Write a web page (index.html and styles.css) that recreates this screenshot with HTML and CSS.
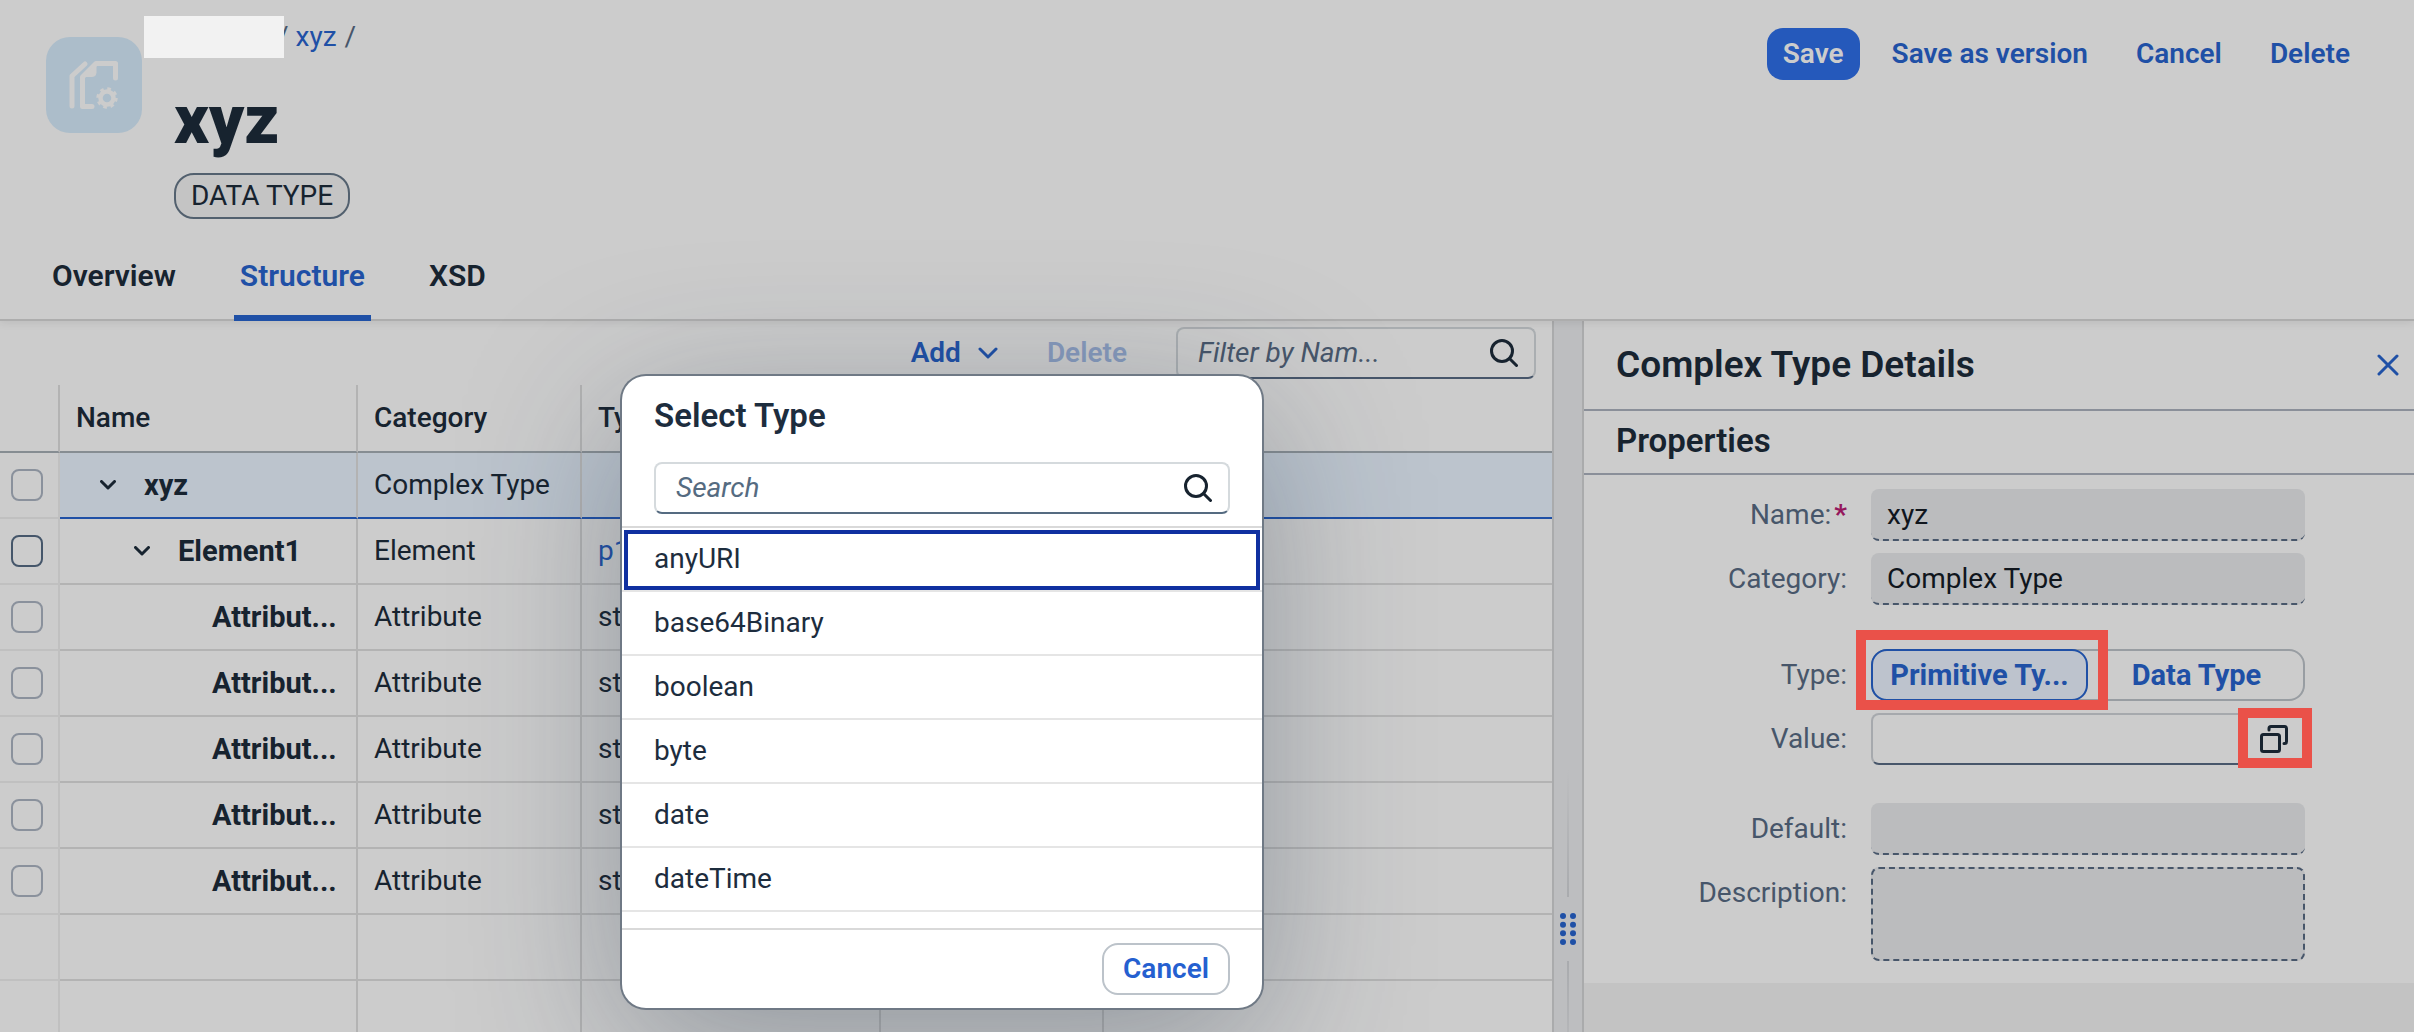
FILE: index.html
```html
<!DOCTYPE html>
<html lang="en">
<head>
<meta charset="utf-8">
<title>xyz - Data Type</title>
<link rel="stylesheet" href="styles.css">
</head>
<body>
<header class="object-header">
  <div class="header-top">
    <div class="avatar">
      <svg viewBox="0 0 96 96" width="96" height="96" fill="none" stroke="#cccccc" stroke-width="5" stroke-linecap="round" stroke-linejoin="round" aria-hidden="true">
        <path d="M39 27 L26 39 V69"/>
        <path d="M46 69.500 H36.500 V40 L50 26.500 H69.500 V41"/>
        <path d="M50 28 V36 Q50 39.500 46 39.500 H38 Z" fill="#cccccc" stroke-width="1"/>
        <circle cx="61" cy="61" r="6.500" stroke-width="4.500"/>
        <circle cx="61" cy="61" r="9" stroke-width="3.400" stroke-linecap="butt" stroke-dasharray="3.500 3.570"/>
      </svg>
    </div>
    <div class="heading">
      <nav class="breadcrumb" aria-label="Breadcrumb">
        <span class="redacted"></span><span class="slash slash-first">/</span><a href="#">xyz</a><span class="slash">/</span>
      </nav>
      <div class="title-block">
        <h1>xyz</h1>
        <span class="tag">DATA TYPE</span>
      </div>
    </div>
    <div class="actions">
      <button type="button" class="btn btn-primary">Save</button>
      <button type="button" class="btn">Save as version</button>
      <button type="button" class="btn">Cancel</button>
      <button type="button" class="btn">Delete</button>
    </div>
  </div>
  <nav class="tabs" aria-label="Sections">
    <a href="#" class="tab">Overview</a>
    <a href="#" class="tab tab-active">Structure</a>
    <a href="#" class="tab">XSD</a>
  </nav>
</header>

<main class="split">
  <section class="structure">
    <div class="toolbar">
      <button type="button" class="tool">Add
        <svg viewBox="0 0 20 12" width="20" height="12" fill="none" stroke="currentColor" stroke-width="3" stroke-linecap="round" stroke-linejoin="round" aria-hidden="true"><path d="M2 2 L10 10 L18 2"/></svg>
      </button>
      <button type="button" class="tool" disabled>Delete</button>
      <div class="search filter">
        <input type="text" placeholder="Filter by Nam..." aria-label="Filter by name">
        <svg class="lens" viewBox="0 0 28 28" width="28" height="28" aria-hidden="true"><circle cx="12" cy="12" r="10.500"/><path d="M19.500 19.500 L26.500 26.500"/></svg>
      </div>
    </div>
    <table class="tree">
      <colgroup><col class="c-sel"><col class="c-name"><col class="c-cat"><col class="c-type"><col class="c-occ"><col></colgroup>
      <thead>
        <tr><th></th><th>Name</th><th>Category</th><th>Type</th><th></th><th></th></tr>
      </thead>
      <tbody>
        <tr class="current">
          <td><input type="checkbox" aria-label="Select xyz"></td>
          <td class="name"><span class="node"><svg class="chev" viewBox="0 0 16 10" aria-hidden="true"><path d="M1.500 1.500 L8 8 L14.500 1.500"/></svg>xyz</span></td>
          <td>Complex Type</td><td></td><td></td><td></td>
        </tr>
        <tr>
          <td><input type="checkbox" class="strong" aria-label="Select Element1"></td>
          <td class="name level-2"><span class="node"><svg class="chev" viewBox="0 0 16 10" aria-hidden="true"><path d="M1.500 1.500 L8 8 L14.500 1.500"/></svg>Element1</span></td>
          <td>Element</td><td><a href="#">p1</a></td><td></td><td></td>
        </tr>
        <tr><td><input type="checkbox" aria-label="Select attribute 1"></td><td class="name leaf">Attribut...</td><td>Attribute</td><td>str</td><td></td><td></td></tr>
        <tr><td><input type="checkbox" aria-label="Select attribute 2"></td><td class="name leaf">Attribut...</td><td>Attribute</td><td>str</td><td></td><td></td></tr>
        <tr><td><input type="checkbox" aria-label="Select attribute 3"></td><td class="name leaf">Attribut...</td><td>Attribute</td><td>str</td><td></td><td></td></tr>
        <tr><td><input type="checkbox" aria-label="Select attribute 4"></td><td class="name leaf">Attribut...</td><td>Attribute</td><td>str</td><td></td><td></td></tr>
        <tr><td><input type="checkbox" aria-label="Select attribute 5"></td><td class="name leaf">Attribut...</td><td>Attribute</td><td>str</td><td></td><td></td></tr>
        <tr><td></td><td></td><td></td><td></td><td></td><td></td></tr>
        <tr><td></td><td></td><td></td><td></td><td></td><td></td></tr>
        <tr><td></td><td></td><td></td><td></td><td></td><td></td></tr>
      </tbody>
    </table>
  </section>

  <div class="splitter" role="separator" aria-orientation="vertical">
    <span class="rail rail-up"></span>
    <svg viewBox="0 0 16 32" width="16" height="32" fill="#1f50a6" aria-hidden="true">
      <circle cx="3" cy="3" r="3"/><circle cx="13" cy="3" r="3"/>
      <circle cx="3" cy="11.700" r="3"/><circle cx="13" cy="11.700" r="3"/>
      <circle cx="3" cy="20.300" r="3"/><circle cx="13" cy="20.300" r="3"/>
      <circle cx="3" cy="29" r="3"/><circle cx="13" cy="29" r="3"/>
    </svg>
    <span class="rail rail-down"></span>
  </div>

  <aside class="details">
    <div class="details-title">
      <h2>Complex Type Details</h2>
      <button type="button" class="close" aria-label="Close"><svg viewBox="0 0 22 22" width="22" height="22" fill="none" stroke="currentColor" stroke-width="3" stroke-linecap="round" aria-hidden="true"><path d="M2 2 L20 20 M20 2 L2 20"/></svg></button>
    </div>
    <h3>Properties</h3>
    <form class="form">
      <label for="f-name">Name:<span class="required">*</span></label>
      <input id="f-name" class="field" type="text" value="xyz" readonly>
      <label for="f-category">Category:</label>
      <input id="f-category" class="field" type="text" value="Complex Type" readonly>
      <span class="label group-start" id="l-type">Type:</span>
      <div class="segmented group-start" role="group" aria-labelledby="l-type">
        <button type="button" class="segment segment-on" aria-pressed="true">Primitive Ty...</button>
        <button type="button" class="segment" aria-pressed="false">Data Type</button>
        <span class="marker marker-type"></span>
      </div>
      <label for="f-value">Value:</label>
      <div class="value-help">
        <input id="f-value" type="text">
        <button type="button" class="help" aria-label="Select type"><svg viewBox="0 0 28 28" width="28" height="28" fill="none" stroke="#17232f" stroke-width="3" stroke-linecap="round" stroke-linejoin="round" aria-hidden="true"><rect x="1.500" y="9.500" width="18" height="17" rx="2"/><path d="M9 5 V3.500 Q9 1.500 11 1.500 H24.500 Q26.500 1.500 26.500 3.500 V16.500 Q26.500 18.500 24.500 18.500 H24"/></svg></button>
        <span class="marker marker-value"></span>
      </div>
      <label class="group-start-wide" for="f-default">Default:</label>
      <input id="f-default" class="field group-start-wide" type="text" readonly>
      <label for="f-description">Description:</label>
      <textarea id="f-description" class="field area" readonly></textarea>
    </form>
  </aside>
</main>

<div class="dialog" role="dialog" aria-labelledby="dlg-title">
  <h2 id="dlg-title">Select Type</h2>
  <div class="dialog-search">
    <div class="search">
      <input type="text" placeholder="Search" aria-label="Search">
      <svg class="lens" viewBox="0 0 28 28" width="28" height="28" aria-hidden="true"><circle cx="12" cy="12" r="10.500"/><path d="M19.500 19.500 L26.500 26.500"/></svg>
    </div>
  </div>
  <ul class="types">
    <li class="focused">anyURI</li>
    <li>base64Binary</li>
    <li>boolean</li>
    <li>byte</li>
    <li>date</li>
    <li>dateTime</li>
  </ul>
  <div class="dialog-footer">
    <button type="button" class="btn btn-outline">Cancel</button>
  </div>
</div>
</body>
</html>
```
FILE: styles.css
```css
* { box-sizing: border-box; }

:root {
  --page: #cccccc;
  --ink: #17232f;
  --muted: #47566a;
  --blue: #1f50a6;
  --line: #b3b3b3;
  --line-soft: #c0c0c0;
  --line-strong: #8a8f99;
  --readonly: #bbbcbe;
  --mark: #ea5149;
}

html, body { height: 100%; }

body {
  margin: 0;
  display: flex;
  flex-direction: column;
  position: relative;
  overflow: hidden;
  background: var(--page);
  color: var(--ink);
  font: 28px/34px Roboto, "Liberation Sans", sans-serif;
}

h1, h2, h3, ul { margin: 0; padding: 0; }
a { color: var(--blue); text-decoration: none; }
button, input, textarea { font: inherit; color: inherit; margin: 0; }
button { cursor: pointer; }

/* Object header */
.object-header {
  position: relative;
  flex: none;
  padding: 16px 48px 0 46px;
  border-bottom: 2px solid #adadad;
  box-shadow: 0 2px 8px rgba(0, 0, 0, .08);
}
.header-top { display: flex; align-items: flex-start; gap: 2px; }
.avatar {
  flex: none;
  width: 96px;
  height: 96px;
  margin-top: 21px;
  border-radius: 24px;
  background: #acbdca;
}
.avatar svg { display: block; }
.heading { flex: 1; }
.breadcrumb { display: flex; align-items: center; height: 42px; }
.redacted { position: relative; z-index: 1; width: 140px; height: 42px; background: #f2f2f2; }
.slash { color: var(--muted); margin-left: 8px; }
.slash-first { margin: 0 7px 0 -7px; }
.title-block { padding: 22px 0 0 30px; }
h1 { font-size: 68px; line-height: 80px; font-weight: 900; }
.tag {
  display: inline-block;
  margin-top: 13px;
  padding: 4px 15px;
  border: 2px solid #52606e;
  border-radius: 20px;
  background: #c4c4c4;
}
.actions { display: flex; gap: 16px; padding-top: 12px; }
.btn {
  height: 52px;
  padding: 0 14px;
  border: 2px solid transparent;
  border-radius: 16px;
  background: none;
  color: var(--blue);
  font-weight: 600;
}
.btn-primary { background: #2559bb; color: var(--page); }

.tabs { display: flex; gap: 52px; margin: 40px 0 -2px; font-size: 30px; }
.tab {
  padding: 0 6px 22px;
  border-bottom: 6px solid transparent;
  color: var(--ink);
  font-weight: 600;
}
.tab-active { color: var(--blue); border-bottom-color: var(--blue); border-radius: 4px 4px 0 0; }

/* Work area */
.split {
  flex: 1;
  min-height: 0;
  display: grid;
  grid-template-columns: minmax(0, 1552fr) 32px minmax(0, 830fr);
}
.structure { overflow: hidden; }

.toolbar {
  display: flex;
  align-items: center;
  justify-content: flex-end;
  height: 64px;
  padding-right: 16px;
}
.tool {
  display: flex;
  align-items: center;
  gap: 17px;
  padding: 0;
  margin-right: 49px;
  border: 0;
  background: none;
  color: var(--blue);
  font-weight: 600;
}
.tool:disabled { opacity: .4; }

.search {
  display: flex;
  align-items: center;
  height: 52px;
  padding: 0 16px 0 20px;
  border: 2px solid #d5dadd;
  border-bottom-color: #556b81;
  border-radius: 8px;
}
.search input {
  flex: 1;
  min-width: 0;
  padding: 0;
  border: 0;
  outline: 0;
  background: none;
}
.search input::placeholder { color: #556b81; font-style: italic; opacity: 1; }
.lens { flex: none; fill: none; stroke: var(--ink); stroke-width: 3; stroke-linecap: round; }
.filter { width: 360px; border-color: #aaaeb1; border-bottom-color: var(--muted); }
.filter input::placeholder { color: var(--muted); }

.tree { width: 100%; table-layout: fixed; border-collapse: separate; border-spacing: 0; }
.c-sel { width: 60px; }
.c-name { width: 298px; }
.c-cat { width: 224px; }
.c-type { width: 299px; }
.c-occ { width: 223px; }
.tree th, .tree td {
  padding: 0 0 0 16px;
  border-right: 2px solid var(--line);
  border-bottom: 2px solid var(--line);
  text-align: left;
  white-space: nowrap;
}
.tree th { height: 68px; font-weight: 500; border-bottom-color: #868d92; }
.tree td { height: 66px; }
.tree th:last-child, .tree td:last-child { border-right: 0; }
.tree td:first-child { padding-left: 11px; border-color: var(--line-soft); }
.current td { background: #bcc4cd; border-bottom-color: var(--blue); }
.current td:first-child { background: none; }
.tree input {
  display: block;
  appearance: none;
  width: 32px;
  height: 32px;
  border: 2px solid #8a919c;
  border-radius: 8px;
}
.tree .strong { border-color: #45566a; }
.name { font-size: 29px; font-weight: 700; }
.node { display: flex; align-items: center; }
.chev {
  width: 16px;
  height: 10px;
  margin: 0 28px 0 24px;
  fill: none;
  stroke: var(--ink);
  stroke-width: 3;
  stroke-linecap: round;
  stroke-linejoin: round;
}
.tree .level-2 { padding-left: 50px; }
.tree .leaf { padding-left: 152px; }

.splitter {
  display: flex;
  flex-direction: column;
  align-items: center;
  gap: 16px;
  padding-top: 448px;
  border: solid #aaabac;
  border-width: 0 2px;
  background: #bdbec0;
  overflow: hidden;
}
.splitter svg { flex: none; }
.rail { flex: none; width: 2px; height: 128px; }
.rail-up { background: linear-gradient(to top, #a9abae, #bdbec0); }
.rail-down { background: linear-gradient(to bottom, #a9abae, #bdbec0); }

/* Details panel */
.details { overflow: hidden; background: #c3c3c3; }
.details-title {
  display: flex;
  align-items: center;
  justify-content: space-between;
  height: 90px;
  padding: 0 15px 0 32px;
  border-bottom: 2px solid var(--line-strong);
  background: var(--page);
}
.details-title h2 { font-size: 37px; line-height: 44px; font-weight: 600; }
.close { display: flex; padding: 0; border: 0; background: none; color: var(--blue); }
h3 {
  height: 64px;
  padding-left: 32px;
  border-bottom: 2px solid var(--line-strong);
  background: var(--page);
  font-size: 33px;
  line-height: 60px;
  font-weight: 600;
}
.form {
  display: grid;
  grid-template-columns: 263px minmax(0, 1fr);
  gap: 12px 24px;
  padding: 14px 109px 22px 0;
  background: var(--page);
}
.form label, .form .label { color: var(--muted); text-align: right; line-height: 52px; }
.form .group-start { margin-top: 32px; }
.form .group-start-wide { margin-top: 26px; }
.required { color: #95175c; font-weight: 700; margin-left: 3px; }
.field {
  width: 100%;
  height: 52px;
  padding: 0 16px;
  border: 0 dashed var(--muted);
  border-bottom-width: 2px;
  border-radius: 8px;
  outline: 0;
  background: var(--readonly);
  color: #10161d;
}
.area { display: block; height: 94px; border-width: 2px; resize: none; }

.segmented {
  position: relative;
  display: flex;
  height: 52px;
  border-radius: 16px;
  box-shadow: inset 0 0 0 2px #989da2;
}
.segment {
  flex: 1;
  padding: 0;
  border: 2px solid transparent;
  border-radius: 16px;
  background: none;
  color: var(--blue);
  font-size: 29px;
  font-weight: 700;
  white-space: nowrap;
}
.segment-on { border-color: var(--blue); background: #bdc3cd; }

.value-help {
  position: relative;
  display: flex;
  height: 52px;
  border: 2px solid #a6a9ad;
  border-bottom-color: var(--muted);
  border-radius: 8px;
}
.value-help input { flex: 1; min-width: 0; padding: 0 14px; border: 0; outline: 0; background: none; }
.help { display: flex; align-items: center; padding: 0 15px; border: 0; background: none; }

/* Annotation frames over the controls */
.marker { position: absolute; border: 10px solid var(--mark); pointer-events: none; }
.marker-type { left: -15px; right: 197px; top: -19px; bottom: -9px; }
.marker-value { right: -9px; width: 74px; top: -7px; height: 60px; }

/* Type selection dialog */
.dialog {
  position: absolute;
  left: 622px;
  top: 376px;
  width: 640px;
  border-radius: 24px;
  background: #fff;
  color: #1d2d3e;
  box-shadow: 0 0 0 2px #6f7985, 0 40px 160px rgba(34, 53, 72, .35);
}
.dialog h2 { padding: 0 32px; font-size: 33px; line-height: 80px; font-weight: 600; }
.dialog-search { padding: 6px 32px 12px; border-bottom: 2px solid #d9d9d9; }
.types { height: 400px; list-style: none; overflow: hidden; }
.types li {
  height: 64px;
  padding: 0 32px;
  line-height: 62px;
  border-bottom: 2px solid #e5e5e5;
}
.types .focused { outline: 4px solid #1030a0; outline-offset: -6px; }
.dialog-footer {
  display: flex;
  justify-content: flex-end;
  padding: 13px 32px;
  border-top: 2px solid #d9d9d9;
}
.btn-outline { padding: 0 19px; border-color: #bcc3ca; color: #2560d0; }
```
